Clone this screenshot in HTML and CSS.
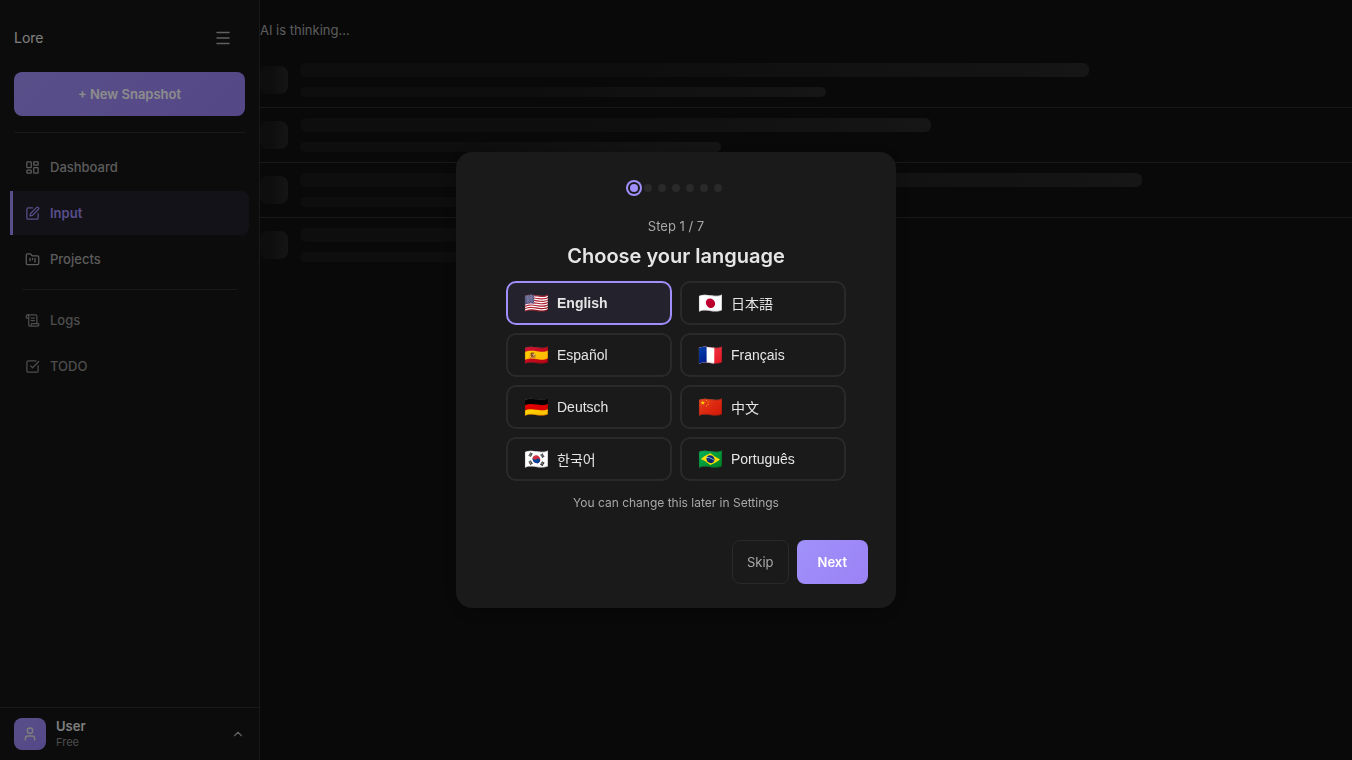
FILE: index.html
```
<!DOCTYPE html>
<html lang="en">
<head>
    <meta charset="UTF-8">
    <meta name="viewport" content="width=device-width, initial-scale=1.0">
    <title>Lore</title>
    <link rel="stylesheet" href="styles.css">
</head>
<body>
    <div class="app">
        <aside class="sidebar">
            <div class="sidebar-header">
                <span class="logo">Lore</span>
                <button class="menu-btn" aria-label="Toggle sidebar">
                    <svg width="18" height="18" viewBox="0 0 18 18"><path d="M3 3.500h12M3 9h12M3 14.500h12"/></svg>
                </button>
            </div>
            <div class="new-wrap">
                <button class="new-btn">+ New Snapshot</button>
            </div>
            <nav class="nav">
                <a href="#" class="nav-item">
                    <svg class="icon" viewBox="0 0 24 24"><rect x="3" y="3" width="7" height="9" rx="1"/><rect x="14" y="3" width="7" height="5" rx="1"/><rect x="14" y="12" width="7" height="9" rx="1"/><rect x="3" y="16" width="7" height="5" rx="1"/></svg>
                    Dashboard
                </a>
                <a href="#" class="nav-item active">
                    <svg class="icon" viewBox="0 0 24 24"><path d="M12 3H5a2 2 0 0 0-2 2v14a2 2 0 0 0 2 2h14a2 2 0 0 0 2-2v-7"/><path d="M18.375 2.625a1 1 0 0 1 3 3l-9.013 9.014a2 2 0 0 1-.853.505l-2.873.84a.5.5 0 0 1-.62-.62l.84-2.873a2 2 0 0 1 .506-.852z"/></svg>
                    Input
                </a>
                <a href="#" class="nav-item">
                    <svg class="icon" viewBox="0 0 24 24"><path d="M4 20h16a2 2 0 0 0 2-2V8a2 2 0 0 0-2-2h-7.930a2 2 0 0 1-1.660-.900l-.820-1.200A2 2 0 0 0 7.930 3H4a2 2 0 0 0-2 2v13c0 1.100.900 2 2 2Z"/><path d="M8 10v4M12 10v2M16 10v6"/></svg>
                    Projects
                </a>
                <div class="nav-divider"></div>
                <a href="#" class="nav-item muted">
                    <svg class="icon" viewBox="0 0 24 24"><path d="M15 12h-5M15 8h-5M19 17V5a2 2 0 0 0-2-2H4"/><path d="M8 21h12a2 2 0 0 0 2-2v-1a1 1 0 0 0-1-1H11a1 1 0 0 0-1 1v1a2 2 0 1 1-4 0V5a2 2 0 1 0-4 0v2a1 1 0 0 0 1 1h3"/></svg>
                    Logs
                </a>
                <a href="#" class="nav-item muted">
                    <svg class="icon" viewBox="0 0 24 24"><path d="M21 10.500V19a2 2 0 0 1-2 2H5a2 2 0 0 1-2-2V5a2 2 0 0 1 2-2h12.500"/><path d="m9 11 3 3L22 4"/></svg>
                    TODO
                </a>
            </nav>
            <button class="user">
                <span class="avatar">
                    <svg width="16" height="16" viewBox="0 0 24 24" stroke-width="2"><path d="M19 21v-2a4 4 0 0 0-4-4H9a4 4 0 0 0-4 4v2"/><circle cx="12" cy="7" r="4"/></svg>
                </span>
                <span class="user-info">
                    <span class="user-name">User</span>
                    <span class="user-plan">Free</span>
                </span>
                <svg class="chevron" viewBox="0 0 24 24"><path d="m18 15-6-6-6 6"/></svg>
            </button>
        </aside>

        <main class="main">
            <p class="status">AI is thinking...</p>
            <div class="skeleton-row">
                <div class="skeleton square"></div>
                <div class="lines">
                    <div class="skeleton line" style="width: 75%"></div>
                    <div class="skeleton line small" style="width: 50%"></div>
                </div>
            </div>
            <div class="skeleton-row">
                <div class="skeleton square"></div>
                <div class="lines">
                    <div class="skeleton line" style="width: 60%"></div>
                    <div class="skeleton line small" style="width: 40%"></div>
                </div>
            </div>
            <div class="skeleton-row">
                <div class="skeleton square"></div>
                <div class="lines">
                    <div class="skeleton line" style="width: 80%"></div>
                    <div class="skeleton line small" style="width: 55%"></div>
                </div>
            </div>
            <div class="skeleton-row">
                <div class="skeleton square"></div>
                <div class="lines">
                    <div class="skeleton line" style="width: 50%"></div>
                    <div class="skeleton line small" style="width: 35%"></div>
                </div>
            </div>
        </main>
    </div>

    <div class="overlay">
        <div class="modal" role="dialog" aria-modal="true" aria-labelledby="modal-title">
            <div class="dots">
                <span class="dot active"></span>
                <span class="dot"></span>
                <span class="dot"></span>
                <span class="dot"></span>
                <span class="dot"></span>
                <span class="dot"></span>
                <span class="dot"></span>
            </div>
            <p class="step">Step 1 / 7</p>
            <h2 id="modal-title">Choose your language</h2>
            <div class="languages">
                <button class="lang selected"><span class="flag">🇺🇸</span>English</button>
                <button class="lang" lang="ja"><span class="flag">🇯🇵</span>日本語</button>
                <button class="lang" lang="es"><span class="flag">🇪🇸</span>Español</button>
                <button class="lang" lang="fr"><span class="flag">🇫🇷</span>Français</button>
                <button class="lang" lang="de"><span class="flag">🇩🇪</span>Deutsch</button>
                <button class="lang" lang="zh"><span class="flag">🇨🇳</span>中文</button>
                <button class="lang" lang="ko"><span class="flag">🇰🇷</span>한국어</button>
                <button class="lang" lang="pt"><span class="flag">🇧🇷</span>Português</button>
            </div>
            <p class="hint">You can change this later in Settings</p>
            <div class="actions">
                <button class="btn skip">Skip</button>
                <button class="btn next">Next</button>
            </div>
        </div>
    </div>
</body>
</html>
```

FILE: styles.css
```
* {
    box-sizing: border-box;
    margin: 0;
    padding: 0;
}
body {
    background: #111;
    color: #e5e5e5;
    font-family: Inter, sans-serif;
    font-size: 13px;
    line-height: 20px;
}
button {
    font-family: inherit;
    cursor: pointer;
}
svg {
    fill: none;
    stroke: currentColor;
    stroke-linecap: round;
    stroke-linejoin: round;
}
.app {
    display: flex;
    min-height: 100vh;
}

/* sidebar */
.sidebar {
    width: 260px;
    flex-shrink: 0;
    display: flex;
    flex-direction: column;
    background: #161616;
    border-right: 1px solid #2e2e2e;
}
.sidebar-header {
    display: flex;
    justify-content: space-between;
    align-items: center;
    padding: 16px 14px 12px;
}
.logo {
    font-size: 14px;
}
.menu-btn {
    display: flex;
    justify-content: center;
    align-items: center;
    width: 44px;
    height: 44px;
    background: none;
    border: none;
    color: #b0b0b0;
}
.menu-btn svg {
    stroke-width: 1.5;
}
.new-wrap {
    margin: 0 14px;
    padding-bottom: 16px;
    border-bottom: 1px solid #2e2e2e;
}
.new-btn {
    width: 100%;
    height: 44px;
    border: none;
    border-radius: 8px;
    background: linear-gradient(135deg, #a091fa, #9b82f5);
    color: #fff;
    font-size: 13px;
    font-weight: 600;
}
.nav {
    flex: 1;
    display: flex;
    flex-direction: column;
    gap: 2px;
    padding: 12px 10px;
}
.nav-item {
    display: flex;
    align-items: center;
    gap: 10px;
    height: 44px;
    padding: 0 12px;
    border-left: 3px solid transparent;
    border-radius: 0 8px 8px 0;
    color: #a8a8a8;
    font-weight: 500;
    text-decoration: none;
}
.nav-item.active {
    background: #24222c;
    border-left-color: #a08ffa;
    color: #a08ffa;
    font-weight: 600;
}
.nav-item.muted {
    color: #8c8c8c;
}
.icon {
    width: 15px;
    height: 15px;
    stroke-width: 2;
}
.nav-divider {
    height: 1px;
    margin: 6px 12px;
    background: #2e2e2e;
}
.user {
    display: flex;
    align-items: center;
    gap: 10px;
    padding: 10px 14px;
    background: none;
    border: none;
    border-top: 1px solid #2e2e2e;
    color: #e5e5e5;
    text-align: left;
}
.avatar {
    display: flex;
    justify-content: center;
    align-items: center;
    width: 32px;
    height: 32px;
    border-radius: 8px;
    background: linear-gradient(135deg, #a091fa, #9b82f5);
}
.user-info {
    flex: 1;
    display: flex;
    flex-direction: column;
}
.user-name {
    font-size: 13px;
    font-weight: 600;
    line-height: 16px;
}
.user-plan {
    color: #8c8c8c;
    font-size: 11px;
    line-height: 16px;
}
.chevron {
    width: 14px;
    height: 14px;
    stroke-width: 2;
    color: #b0b0b0;
}

/* loading list */
.main {
    flex: 1;
    min-width: 0;
    padding-top: 20px;
}
.status {
    color: #a8a8a8;
    margin-bottom: 13px;
}
.skeleton-row {
    display: flex;
    align-items: center;
    gap: 12px;
    padding: 10px 0;
    border-bottom: 1px solid #2e2e2e;
}
.skeleton-row:last-child {
    border-bottom: none;
}
.skeleton {
    background: linear-gradient(90deg, #1a1a1a 40%, #282828);
}
.square {
    width: 28px;
    height: 28px;
    border-radius: 8px;
}
.lines {
    flex: 1;
    display: flex;
    flex-direction: column;
    gap: 10px;
}
.line {
    height: 14px;
    border-radius: 6px;
}
.line.small {
    height: 10px;
}

/* onboarding */
.overlay {
    position: fixed;
    inset: 0;
    display: flex;
    justify-content: center;
    align-items: center;
    background: rgba(0, 0, 0, 0.45);
}
.modal {
    width: 440px;
    max-width: 90%;
    padding: 32px 28px 24px;
    border-radius: 16px;
    background: #1a1a1a;
    box-shadow: 0 4px 24px rgba(0, 0, 0, 0.3);
    text-align: center;
}
.dots {
    display: flex;
    justify-content: center;
    gap: 6px;
    margin-bottom: 24px;
}
.dot {
    width: 8px;
    height: 8px;
    border-radius: 50%;
    background: #2a2a2a;
}
.dot.active {
    background: #a08ffa;
    box-shadow: 0 0 0 2px #1a1a1a, 0 0 0 4px #a08ffa;
}
.step {
    color: #a8a8a8;
    margin-bottom: 6px;
}
h2 {
    font-size: 20px;
    font-weight: 600;
    line-height: 28px;
    margin-bottom: 11px;
}
.languages {
    display: grid;
    grid-template-columns: 1fr 1fr;
    gap: 8px;
    max-width: 340px;
    margin: 0 auto 12px;
}
.lang {
    display: flex;
    align-items: center;
    gap: 8px;
    height: 44px;
    padding: 0 16px;
    border: 2px solid #2a2a2a;
    border-radius: 10px;
    background: #1a1a1a;
    color: #e5e5e5;
    font-family: "Liberation Sans", "Noto Sans CJK JP", sans-serif;
    font-size: 14px;
}
.lang.selected {
    border-color: #a08ffa;
    background: #24222c;
    font-weight: 600;
}
.flag {
    font-size: 20px;
    font-weight: 400;
}
.hint {
    color: #a8a8a8;
    font-size: 12px;
    margin-bottom: 27px;
}
.actions {
    display: flex;
    justify-content: flex-end;
    gap: 8px;
}
.btn {
    height: 44px;
    border-radius: 8px;
    font-size: 13px;
}
.skip {
    padding: 0 14px;
    border: 1px solid #2a2a2a;
    background: none;
    color: #a8a8a8;
    font-weight: 400;
}
.next {
    padding: 0 21px;
    border: none;
    background: linear-gradient(135deg, #a091fa, #9b82f5);
    color: #fff;
    font-weight: 600;
}
```
